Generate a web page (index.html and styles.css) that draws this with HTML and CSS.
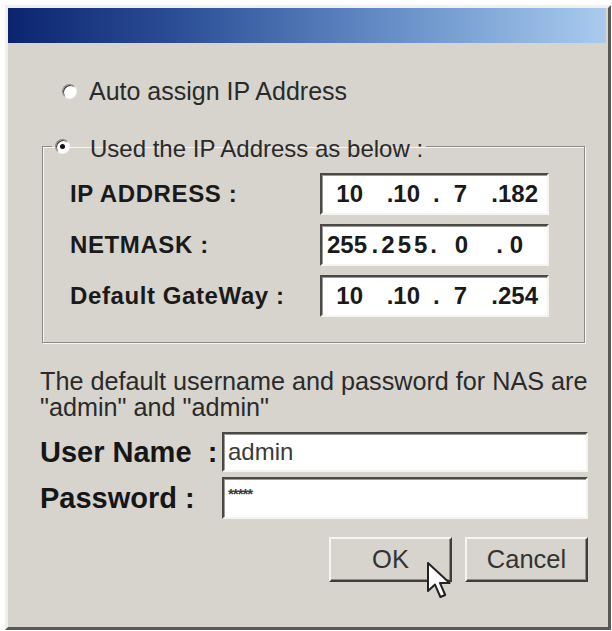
FILE: index.html
```html
<!DOCTYPE html>
<html lang="en">
<head>
    <meta charset="UTF-8">
    <meta name="viewport" content="width=device-width, initial-scale=1.0">
    <title>NAS Network Setup</title>
    <link rel="stylesheet" href="styles.css">
</head>
<body>
    <div class="dialog">
        <div class="titlebar"></div>

        <div class="content">
            <label class="radio-row auto">
                <span class="radio"></span>
                <span>Auto assign IP Address</span>
            </label>

            <fieldset class="group">
                <legend class="radio-row">
                    <span class="radio checked"></span>
                    <span class="legend-text">Used the IP Address as below :</span>
                </legend>

                <div class="ip-row">
                    <span class="ip-label">IP ADDRESS :</span>
                    <div class="ip-box"><span>10</span><span>.10</span><span>.&ensp;&#8202;7</span><span>.182</span></div>
                </div>
                <div class="ip-row">
                    <span class="ip-label">NETMASK :</span>
                    <div class="ip-box mask"><span>255</span><span class="wide">.255.</span><span>0</span><span>.&nbsp;0</span></div>
                </div>
                <div class="ip-row">
                    <span class="ip-label">Default GateWay :</span>
                    <div class="ip-box"><span>10</span><span>.10</span><span>.&ensp;&#8202;7</span><span>.254</span></div>
                </div>
            </fieldset>

            <p class="note">The default username and password for NAS are "admin" and "admin"</p>

            <div class="login-row">
                <span class="login-label">User Name&nbsp;&nbsp;:</span>
                <div class="text-box">admin</div>
            </div>
            <div class="login-row">
                <span class="login-label">Password :</span>
                <div class="text-box secret">*****</div>
            </div>

            <div class="buttons">
                <button class="btn">OK</button>
                <button class="btn">Cancel</button>
                <!-- mouse pointer resting on the OK button -->
                <svg class="pointer" width="32" height="40" viewBox="0 0 16 20">
                    <path d="M1 1 L1 15 L4.5 11.8 L7.2 18 L9.6 17 L7 11 L11.8 11 Z"
                          fill="#fff" stroke="#222" stroke-width="1" stroke-linejoin="round"/>
                </svg>
            </div>
        </div>
    </div>
</body>
</html>
```

FILE: styles.css
```css
body {
    margin: 0;
    background: #fff;
    font-family: "Liberation Sans", Arial, sans-serif;
    color: #1e1e1e;
}

.dialog {
    box-sizing: border-box;
    width: 606px;
    height: 625px;
    margin: 5px 0 0 5px;
    background: #d7d4ce;
    border: 3px solid;
    border-color: #f2f0ec #5a5854 #5a5854 #f2f0ec;
    display: flex;
    flex-direction: column;
}

.titlebar {
    height: 35px;
    margin: 0 2px 0 0;
    background: linear-gradient(90deg, #0c2470 0%, #2e5199 30%, #6890c8 65%, #a9cbef 100%);
}

.content {
    position: relative;
    display: flex;
    flex-direction: column;
    padding: 33px 20px 0 32px;
}

/* radio buttons */
.radio-row {
    display: flex;
    align-items: center;
    gap: 12px;
    font-size: 24px;
    height: 30px;
    color: #2a2a2a;
}

.radio-row.auto {
    margin-left: 22px;
    font-size: 25px;
}

.radio {
    width: 15px;
    height: 15px;
    border-radius: 50%;
    background: #fff;
    border: 1px solid;
    border-color: #8a8884 #f4f3f0 #f4f3f0 #8a8884;
    box-shadow: inset 1px 1px 0 #3c3c3c;
    box-sizing: border-box;
    flex: none;
    position: relative;
}

.radio.checked::after {
    content: "";
    position: absolute;
    left: 4px;
    top: 4px;
    width: 5px;
    height: 5px;
    border-radius: 50%;
    background: #111;
}

/* group box */
.group {
    margin: 25px 3px 0 2px;
    padding: 12px 35px 25px 27px;
    border: 1px solid #8e8b86;
    box-shadow: inset 1px 1px 0 #f7f6f3, 1px 1px 0 #f7f6f3;
}

.group legend {
    margin-left: -18px;
    padding: 0 3px;
    gap: 20px;
}

.legend-text {
    padding-top: 6px;
}

.ip-row {
    display: flex;
    align-items: center;
    justify-content: space-between;
    height: 42px;
}

.ip-row + .ip-row {
    margin-top: 9px;
}

.ip-label {
    font-weight: bold;
    font-size: 24px;
    letter-spacing: 0.6px;
    color: #1a1a1a;
}

.ip-box,
.text-box {
    box-sizing: border-box;
    background: #fff;
    border: 2px solid;
    border-color: #4a4946 #f5f4f1 #f5f4f1 #4a4946;
    box-shadow: inset 1px 1px 0 #9c9a95;
}

/* one column per octet, text pushed to the right of each */
.ip-box {
    width: 229px;
    height: 100%;
    display: grid;
    grid-template-columns: 41px 57px 47px 71px;
    align-items: center;
    font-weight: bold;
    font-size: 24px;
    color: #1a1a1a;
    text-align: right;
}

.ip-box.mask {
    grid-template-columns: 45px 70px 31px 55px;
}

.ip-box .wide {
    letter-spacing: 3px;
    margin-right: -3px;
}

.note {
    margin: 25px 0 0 0;
    font-size: 25.2px;
    line-height: 26px;
    color: #2a2a2a;
    width: 556px;
}

.login-row {
    display: flex;
    align-items: center;
    gap: 5px;
    margin-top: 12px;
    height: 40px;
}

.login-row + .login-row {
    margin-top: 5px;
    height: 42px;
}

.login-label {
    width: 177px;
    font-size: 29px;
    font-weight: bold;
    color: #161616;
    white-space: nowrap;
}

.text-box {
    flex: 1;
    height: 100%;
    padding: 4px 4px 0 4px;
    font-size: 24px;
    color: #3a3a3a;
}

.text-box.secret {
    font-size: 15px;
    padding-top: 6px;
    font-weight: bold;
    letter-spacing: -1px;
}

/* dialog buttons */
.buttons {
    display: flex;
    justify-content: flex-end;
    gap: 13px;
    margin-top: 18px;
    position: relative;
}

.btn {
    width: 123px;
    height: 45px;
    font-family: inherit;
    font-size: 25.5px;
    color: #333;
    background: #d7d4ce;
    border: 2px solid;
    border-color: #f6f5f2 #3e3d3a #3e3d3a #f6f5f2;
    box-shadow: inset -1px -1px 0 #8e8c88;
    padding: 0;
}

.pointer {
    position: absolute;
    left: 386px;
    top: 24px;
}
```
